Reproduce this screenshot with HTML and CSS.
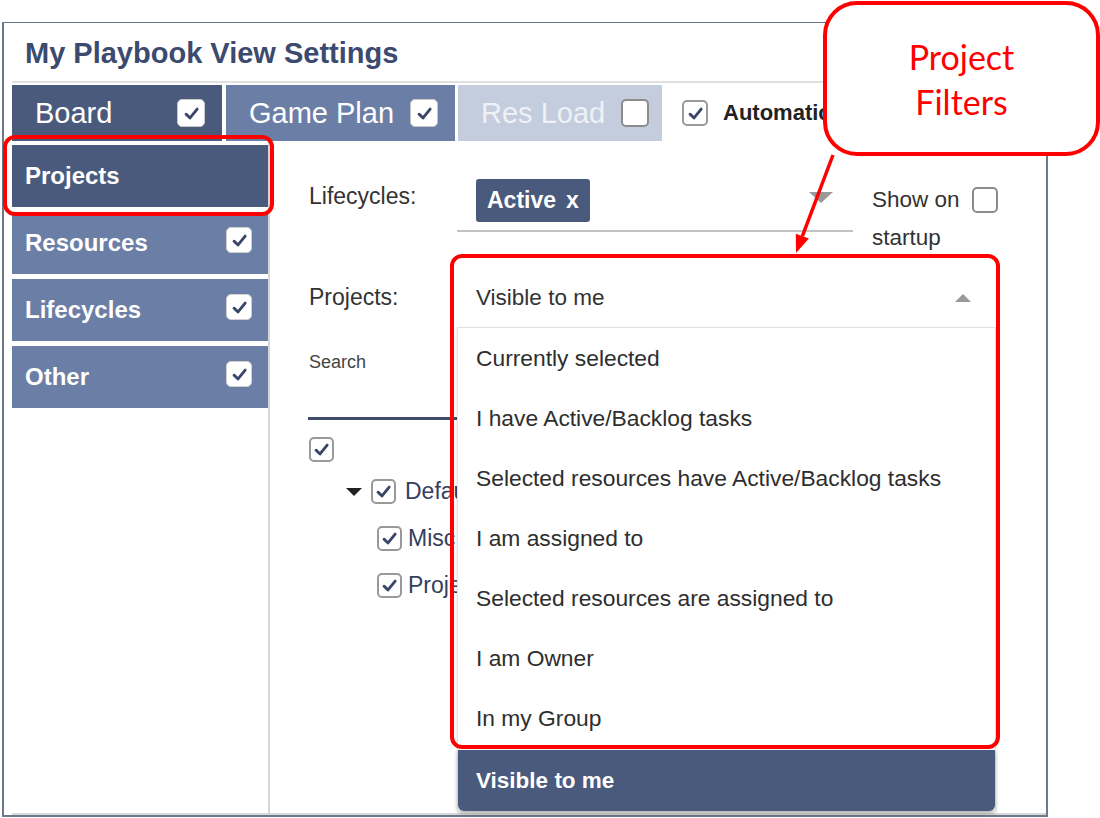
FILE: index.html
```html
<!DOCTYPE html>
<html lang="en">
<head>
    <meta charset="UTF-8">
    <meta name="viewport" content="width=device-width, initial-scale=1.0">
    <title>My Playbook View Settings</title>
    <link rel="stylesheet" href="styles.css">
</head>
<body>
    <div class="panel">
        <div class="title">My Playbook View Settings</div>

        <div class="tabs">
            <div class="tab tab-dark">
                <span>Board</span>
                <span class="cb cb-tab"><svg viewBox="0 0 20 20"><path d="M4.8 10.6 L8.6 14.2 L15.4 5.8"/></svg></span>
            </div>
            <div class="tab tab-mid">
                <span>Game Plan</span>
                <span class="cb cb-tab"><svg viewBox="0 0 20 20"><path d="M4.8 10.6 L8.6 14.2 L15.4 5.8"/></svg></span>
            </div>
            <div class="tab tab-light">
                <span>Res Load</span>
                <span class="cb cb-tab cb-empty"></span>
            </div>
            <div class="auto">
                <span class="cb"><svg viewBox="0 0 20 20"><path d="M4.8 10.6 L8.6 14.2 L15.4 5.8"/></svg></span>
                <span>Automatic</span>
            </div>
        </div>

        <div class="main">
            <div class="sidebar">
                <div class="side-item side-active">Projects</div>
                <div class="side-item">
                    <span>Resources</span>
                    <span class="cb cb-side"><svg viewBox="0 0 20 20"><path d="M4.8 10.6 L8.6 14.2 L15.4 5.8"/></svg></span>
                </div>
                <div class="side-item">
                    <span>Lifecycles</span>
                    <span class="cb cb-side"><svg viewBox="0 0 20 20"><path d="M4.8 10.6 L8.6 14.2 L15.4 5.8"/></svg></span>
                </div>
                <div class="side-item">
                    <span>Other</span>
                    <span class="cb cb-side"><svg viewBox="0 0 20 20"><path d="M4.8 10.6 L8.6 14.2 L15.4 5.8"/></svg></span>
                </div>
            </div>

            <div class="content">
                <div class="row row-lifecycles">
                    <div class="field-label">Lifecycles:</div>
                    <div class="select">
                        <span class="chip">Active <span class="chip-x">x</span></span>
                        <span class="caret-down"></span>
                    </div>
                    <div class="startup">
                        <div class="startup-line">Show on <span class="cb cb-empty"></span></div>
                        <div class="startup-line">startup</div>
                    </div>
                </div>

                <div class="row row-projects">
                    <div class="field-label">Projects:</div>
                    <div class="dropdown">
                        <div class="dropdown-head">
                            <span>Visible to me</span>
                            <span class="caret-up"></span>
                        </div>
                        <ul class="dropdown-list">
                            <li>Currently selected</li>
                            <li>I have Active/Backlog tasks</li>
                            <li>Selected resources have Active/Backlog tasks</li>
                            <li>I am assigned to</li>
                            <li>Selected resources are assigned to</li>
                            <li>I am Owner</li>
                            <li>In my Group</li>
                            <li class="selected">Visible to me</li>
                        </ul>
                    </div>
                </div>

                <div class="search-label">Search</div>
                <div class="search-field"></div>

                <div class="tree">
                    <div class="tree-row tree-root">
                        <span class="cb cb-tree"><svg viewBox="0 0 20 20"><path d="M4.8 10.6 L8.6 14.2 L15.4 5.8"/></svg></span>
                    </div>
                    <div class="tree-row tree-group">
                        <span class="tree-toggle"></span>
                        <span class="cb cb-tree"><svg viewBox="0 0 20 20"><path d="M4.8 10.6 L8.6 14.2 L15.4 5.8"/></svg></span>
                        <span class="tree-text">Default</span>
                    </div>
                    <div class="tree-row tree-leaf">
                        <span class="cb cb-tree"><svg viewBox="0 0 20 20"><path d="M4.8 10.6 L8.6 14.2 L15.4 5.8"/></svg></span>
                        <span class="tree-text">Misc</span>
                    </div>
                    <div class="tree-row tree-leaf">
                        <span class="cb cb-tree"><svg viewBox="0 0 20 20"><path d="M4.8 10.6 L8.6 14.2 L15.4 5.8"/></svg></span>
                        <span class="tree-text">Projects</span>
                    </div>
                </div>
            </div>
        </div>
    </div>

    <!-- annotations -->
    <div class="mark mark-projects"></div>
    <div class="mark mark-dropdown"></div>
    <svg class="callout-arrow" viewBox="0 0 70 110" width="70" height="110">
        <line x1="53" y1="5" x2="22.4" y2="86.2"/>
        <polygon points="16,103 28.9,88.6 15.8,83.7"/>
    </svg>
    <div class="callout">Project<br>Filters</div>
</body>
</html>
```

FILE: styles.css
```css
* {
    margin: 0;
    padding: 0;
    box-sizing: border-box;
}

body {
    font-family: 'Liberation Sans', Arial, sans-serif;
    background: #fff;
    color: #333;
    width: 1100px;
    height: 818px;
    overflow: hidden;
    position: relative;
}

.panel {
    margin: 22px 0 0 2px;
    width: 1046px;
    height: 795px;
    border: 2px solid #6d788c;
    border-top-width: 1px;
    padding-top: 1px;
    padding-left: 8px;
    display: flex;
    flex-direction: column;
}

.title {
    height: 59px;
    line-height: 59px;
    padding-left: 13px;
    font-size: 29px;
    font-weight: bold;
    color: #3b4a6e;
    border-bottom: 2px solid #e0e0e0;
}

/* top tabs */
.tabs {
    display: flex;
    height: 56px;
    margin-top: 2px;
}

.tab {
    display: flex;
    align-items: center;
    justify-content: space-between;
    padding: 0 17px 0 23px;
    font-size: 29px;
    color: #fff;
}

.tab-dark {
    width: 210px;
    margin-right: 4px;
    background: #4a5a7c;
}

.tab-mid {
    width: 229px;
    margin-right: 3px;
    background: #6b7ea6;
}

.tab-light {
    width: 204px;
    padding-right: 13px;
    background: #c4cddd;
    color: #eef1f6;
}

.auto {
    display: flex;
    align-items: center;
    gap: 15px;
    margin-left: 20px;
    font-size: 22px;
    font-weight: bold;
    color: #222;
}

/* checkboxes */
.cb {
    width: 26px;
    height: 26px;
    border: 2px solid #9a9a9a;
    border-radius: 5px;
    background: #fff;
    display: inline-flex;
    align-items: center;
    justify-content: center;
    flex-shrink: 0;
}

.cb svg {
    width: 21px;
    height: 21px;
}

.cb svg path {
    fill: none;
    stroke: #3a4668;
    stroke-width: 2.7;
    stroke-linecap: round;
    stroke-linejoin: round;
}

.cb-tab {
    width: 28px;
    height: 28px;
    border: 1px solid #c8c8c8;
}

.cb-tab.cb-empty {
    border: 2px solid #8c8c8c;
}

.cb-side {
    border: 1px solid #d0d0d0;
    margin-top: -6px;
}

.cb-tree {
    width: 25px;
    height: 25px;
    border: 2px solid #999;
}

/* body */
.main {
    flex: 1;
    display: flex;
    border-bottom: 2px solid #d8d8d8;
}

.sidebar {
    width: 258px;
    padding-top: 4px;
    border-right: 2px solid #d6d6d6;
}

.side-item {
    height: 62px;
    margin-bottom: 5px;
    padding: 0 16px 0 13px;
    display: flex;
    align-items: center;
    justify-content: space-between;
    background: #6b7ea6;
    color: #fff;
    font-size: 24px;
    font-weight: bold;
}

.side-active {
    background: #4a5a7c;
}

.content {
    flex: 1;
    padding-left: 39px;
    display: flex;
    flex-direction: column;
}

.row {
    display: flex;
    align-items: flex-start;
}

.field-label {
    width: 148px;
    font-size: 23px;
    color: #333;
}

.row-lifecycles {
    margin-top: 38px;
}

.row-lifecycles .field-label {
    padding-top: 4px;
    line-height: 26px;
}

.select {
    width: 396px;
    height: 53px;
    border-bottom: 2px solid #c2c2c2;
    padding: 0 20px 0 19px;
    display: flex;
    align-items: flex-start;
    justify-content: space-between;
}

.chip {
    height: 43px;
    padding: 0 11px;
    display: inline-flex;
    align-items: center;
    gap: 10px;
    background: #4a5a7c;
    border-radius: 3px;
    color: #fff;
    font-size: 23px;
    font-weight: bold;
}

.caret-down {
    margin-top: 13px;
    width: 0;
    height: 0;
    border-left: 12.5px solid transparent;
    border-right: 12.5px solid transparent;
    border-top: 11px solid #999;
}

.startup {
    margin-left: 19px;
    padding-top: 2px;
    font-size: 22.5px;
    color: #333;
}

.startup-line {
    height: 38px;
    line-height: 38px;
    display: flex;
    align-items: center;
    gap: 12px;
}

.startup .cb {
    border-color: #8c8c8c;
}

.row-projects {
    margin-top: 11px;
}

.row-projects .field-label {
    line-height: 59px;
}

.dropdown {
    width: 539px;
    position: relative;
}

.dropdown-head {
    height: 59px;
    padding: 0 25px 0 19px;
    display: flex;
    align-items: center;
    justify-content: space-between;
    font-size: 22.5px;
    color: #333;
}

.caret-up {
    width: 0;
    height: 0;
    border-left: 8.5px solid transparent;
    border-right: 8.5px solid transparent;
    border-bottom: 8px solid #999;
}

.dropdown-list {
    position: absolute;
    top: 59px;
    left: 0;
    width: 539px;
    list-style: none;
    background: #fff;
    border: 1px solid #e2e2e2;
    border-bottom: none;
    box-shadow: 0 2px 4px rgba(0,0,0,0.12);
    z-index: 2;
}

.dropdown-list li {
    height: 60px;
    line-height: 60px;
    padding-left: 18px;
    font-size: 22.8px;
    color: #2e2e2e;
}

.dropdown-list li.selected {
    height: 61px;
    line-height: 61px;
    margin-top: 2px;
    background: #4a5a7c;
    color: #fff;
    font-size: 22.5px;
    font-weight: bold;
    border-radius: 0 0 6px 6px;
    box-shadow: 0 2px 4px rgba(0,0,0,0.25);
}

.search-label {
    margin-top: 24px;
    line-height: 22px;
    font-size: 18px;
    color: #444;
}

.search-field {
    margin-left: -1px;
    width: 420px;
    height: 47px;
    border-bottom: 3px solid #3f4c6e;
}

/* project tree */
.tree {
    margin-top: 17px;
}

.tree-row {
    display: flex;
    align-items: center;
    height: 25px;
    font-size: 23px;
    color: #34405e;
}

.tree-group {
    margin-top: 17px;
    padding-left: 37px;
}

.tree-leaf {
    margin-top: 22px;
    padding-left: 68px;
}

.tree-toggle {
    width: 0;
    height: 0;
    margin-right: 9px;
    border-left: 8px solid transparent;
    border-right: 8px solid transparent;
    border-top: 8px solid #222;
}

.tree-group .tree-text {
    margin-left: 9px;
}

.tree-leaf .tree-text {
    margin-left: 6px;
}

/* red annotations */
.mark {
    position: absolute;
    border: 4px solid #f00;
    border-radius: 12px;
    z-index: 4;
}

.mark-projects {
    left: 3px;
    top: 135px;
    width: 271px;
    height: 81px;
}

.mark-dropdown {
    left: 450px;
    top: 254px;
    width: 550px;
    height: 495px;
}

.callout-arrow {
    position: absolute;
    left: 780px;
    top: 150px;
    z-index: 4;
}

.callout-arrow line {
    stroke: #f00;
    stroke-width: 3.5;
}

.callout-arrow polygon {
    fill: #f00;
}

.callout {
    position: absolute;
    left: 823px;
    top: 1px;
    width: 277px;
    height: 155px;
    border: 4px solid #f00;
    border-radius: 34px;
    background: #fff;
    z-index: 5;
    display: flex;
    align-items: center;
    justify-content: center;
    text-align: center;
    font-family: Lato, 'Open Sans', sans-serif;
    font-size: 34px;
    line-height: 45px;
    color: #f00;
}
```
